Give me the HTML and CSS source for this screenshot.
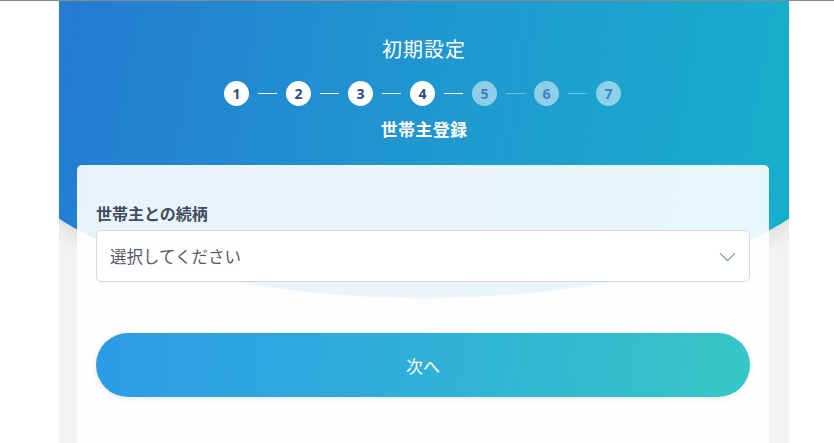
FILE: index.html
```html
<!DOCTYPE html>
<html lang="ja">
<head>
<meta charset="utf-8">
<title>初期設定</title>
<link rel="stylesheet" href="styles.css">
</head>
<body>
<div class="topline"></div>
<div class="page">
  <div class="bg-curve"></div>
  <header class="header">
    <h1 class="title">初期設定</h1>
    <ol class="steps">
      <li class="step done">1</li>
      <li class="bar done"></li>
      <li class="step done">2</li>
      <li class="bar done"></li>
      <li class="step done">3</li>
      <li class="bar done"></li>
      <li class="step done">4</li>
      <li class="bar done"></li>
      <li class="step">5</li>
      <li class="bar"></li>
      <li class="step">6</li>
      <li class="bar"></li>
      <li class="step">7</li>
    </ol>
    <h2 class="subtitle">世帯主登録</h2>
  </header>
  <main class="card">
    <label class="label">世帯主との続柄</label>
    <div class="select">
      <span class="placeholder">選択してください</span>
      <svg class="chevron" width="17" height="10" viewBox="0 0 17 10"><path d="M1 1.2 L8.5 8.5 L16 1.2" fill="none" stroke="#8d9db2" stroke-width="1.3"/></svg>
    </div>
    <button class="next">次へ</button>
  </main>
</div>
</body>
</html>
```

FILE: styles.css
```css
* { box-sizing: border-box; }
html, body { margin: 0; padding: 0; }
body {
  background: #ffffff;
  font-family: "Noto Sans CJK JP", "Noto Sans", sans-serif;
  height: 443px;
  overflow: hidden;
}
.topline { height: 1px; background: #8a8a8a; }
.page {
  position: relative;
  width: 730px;
  margin: 0 0 0 59px;
  height: 442px;
  background: #f3f3f3;
  overflow: hidden;
}
.bg-curve {
  position: absolute;
  left: -55px;
  top: 0;
  width: 840px;
  height: 297px;
  border-radius: 0 0 420px 420px / 0 0 157px 157px;
  background: linear-gradient(100deg, #2577d3 0%, #1f98d0 50%, #16b3cc 100%);
  box-shadow: 0 6px 22px rgba(0,0,0,0.10);
}
.header {
  position: relative;
  display: flex;
  flex-direction: column;
  align-items: center;
  padding-top: 33px;
  color: #fff;
}
.title {
  margin: 0;
  font-size: 20px;
  font-weight: 400;
  line-height: 30px;
  letter-spacing: 1px;
}
.steps {
  list-style: none;
  margin: 17px 0 0 -3px;
  padding: 0;
  display: flex;
  align-items: center;
}
.step {
  width: 25px;
  height: 25px;
  border-radius: 50%;
  background: rgba(255,255,255,0.5);
  color: #3d83bf;
  font-family: "Open Sans", "Noto Sans", sans-serif;
  font-weight: 700;
  font-size: 14px;
  display: flex;
  align-items: center;
  justify-content: center;
  line-height: 1;
}
.step.done { background: #ffffff; color: #2c4b88; }
.bar {
  width: 19px;
  height: 1px;
  margin: 0 9px;
  background: rgba(255,255,255,0.35);
}
.bar.done { background: #ffffff; }
.subtitle {
  margin: 11px 0 0;
  font-size: 17px;
  font-weight: 700;
  line-height: 23px;
  letter-spacing: 0.3px;
}
.card {
  position: relative;
  margin: 25px 20px 0 18px;
  height: 300px;
  background: rgba(255,255,255,0.9);
  border-radius: 5px;
  padding: 37px 19px 0 19px;
  display: flex;
  flex-direction: column;
}
.label {
  font-size: 16px;
  font-weight: 700;
  color: #3f4c5d;
  line-height: 22px;
  margin-bottom: 6px;
}
.select {
  height: 52px;
  background: #fff;
  border: 1px solid #cfd9e5;
  border-radius: 5px;
  display: flex;
  align-items: center;
  justify-content: space-between;
  padding: 0 13px 0 13px;
}
.placeholder {
  font-size: 16.5px;
  color: #555b63;
}
.chevron { margin-top: 1px; }
.next {
  margin-top: 51px;
  height: 64px;
  border: none;
  border-radius: 32px;
  background: linear-gradient(95deg, #2d9be7 0%, #30b2d6 55%, #36c7c5 100%);
  box-shadow: 0 1px 6px rgba(0,0,0,0.10);
  color: #fff;
  font-family: "Noto Sans CJK JP", "Noto Sans", sans-serif;
  font-size: 17px;
  padding: 0;
}
```
